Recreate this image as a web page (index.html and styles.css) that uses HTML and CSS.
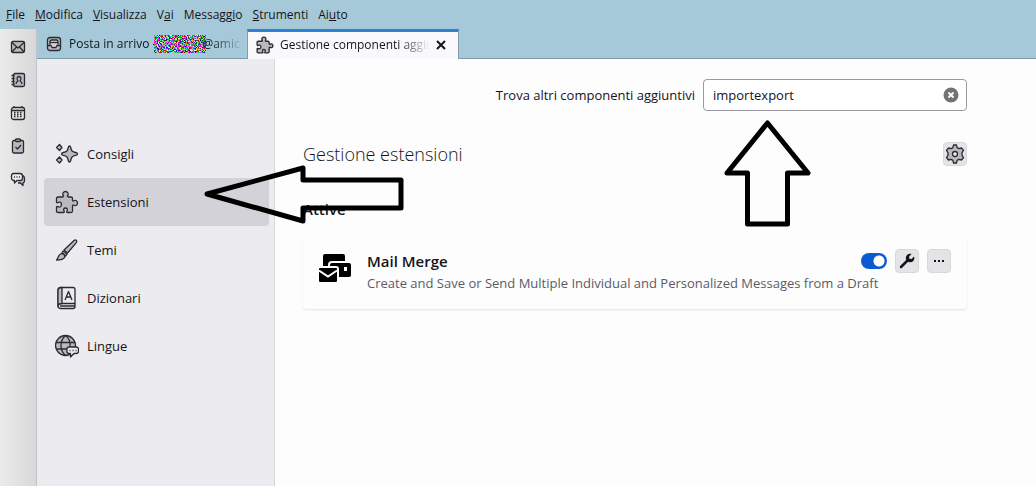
FILE: index.html
```html
<!DOCTYPE html>
<html lang="it">
<head>
    <meta charset="UTF-8">
    <meta name="viewport" content="width=device-width, initial-scale=1.0">
    <title>Gestione componenti aggiuntivi</title>
    <link rel="stylesheet" href="styles.css">
</head>
<body>
    <nav class="menubar">
        <button type="button"><u>F</u>ile</button>
        <button type="button"><u>M</u>odifica</button>
        <button type="button"><u>V</u>isualizza</button>
        <button type="button">V<u>a</u>i</button>
        <button type="button">Messagg<u>i</u>o</button>
        <button type="button"><u>S</u>trumenti</button>
        <button type="button">Ai<u>u</u>to</button>
    </nav>

    <div class="window">
        <!-- Spaces toolbar -->
        <nav class="spaces">
            <button type="button" aria-label="Posta">
                <svg class="icon" width="16" height="16" viewBox="0 0 16 16"><rect x="1.5" y="2.5" width="13" height="11" rx="1.5"/><path d="M2 3.5l6 5.500 6-5.500M2 13l4.500-5M14 13L9.500 8"/></svg>
            </button>
            <button type="button" aria-label="Rubrica">
                <svg class="icon" width="16" height="16" viewBox="0 0 16 16"><rect x="3.500" y="1.500" width="11" height="13" rx="1.500"/><path d="M1.500 3.500h3M1.500 6.500h3M1.500 9.500h3M1.500 12.500h3M6 12c0-2 1-2.500 2-3-1.500-2-1-4.500 1-4.500s2.500 2.500 1 4.500c1 .5 2 1 2 3"/></svg>
            </button>
            <button type="button" aria-label="Calendario">
                <svg class="icon hollow" width="16" height="16" viewBox="0 0 16 16"><rect x="1.500" y="2.500" width="13" height="12" rx="2"/><path d="M2 5.500h12M4 1v1.500M12 1v1.500"/><path stroke-dasharray="1.500 1.500" d="M4 7.500h9M4 9.500h9M4 11.500h9"/></svg>
            </button>
            <button type="button" aria-label="Attività">
                <svg class="icon" width="16" height="16" viewBox="0 0 16 16"><rect x="2.500" y="2.500" width="11" height="12.500" rx="1.500"/><rect x="5.500" y="1" width="5" height="2.500" rx="1"/><path fill="none" d="M5.500 9l2 2 3.500-4"/></svg>
            </button>
            <button type="button" aria-label="Chat">
                <svg class="icon" width="16" height="16" viewBox="0 0 16 16"><path d="M12.500 4.500q2 .5 2 3v2q0 2-1.500 2.500v2.500L10.500 12H8"/><path class="paper" d="M3.500 2.500h6.500q2.500 0 2.500 2.500v2q0 2.500-2.500 2.500H7L4.500 12V9.500h-1Q1.500 9 1.500 7V5q0-2.500 2-2.500z"/><path d="M4 6h1M6.500 6h1M9 6h1"/></svg>
            </button>
        </nav>

        <div class="workspace">
            <div class="tabs" role="tablist">
                <div class="tab" role="tab" aria-selected="false">
                    <svg class="icon" width="16" height="16" viewBox="0 0 16 16"><rect x="1.500" y="1.500" width="13" height="13" rx="2.500"/><path class="paper" d="M2 9.500h3l1 2h4l1-2h3M4 8.500v-3q0-1.500 1.500-1.500h5Q12 4 12 5.500v3M4 6.500h8"/></svg>
                    <span class="tab-label">Posta in arrivo -<svg class="noise" width="52" height="18" aria-hidden="true"><filter id="grain" x="0" y="0" width="100%" height="100%" color-interpolation-filters="sRGB"><feTurbulence type="fractalNoise" baseFrequency="0.9" numOctaves="2" seed="4"/><feColorMatrix values="4 0 0 0 -1.500  0 4 0 0 -1.500  0 0 4 0 -1.400  0 0 0 0 1"/></filter><rect width="52" height="18" filter="url(#grain)"/></svg>@amic</span>
                </div>
                <div class="tab active" role="tab" aria-selected="true">
                    <svg class="icon tab-icon" width="18" height="18" viewBox="0 0 24 24"><use href="#puzzle"/></svg>
                    <span class="tab-label">Gestione componenti aggiuntivi</span>
                    <button type="button" class="tab-close" aria-label="Chiudi scheda">
                        <svg width="10" height="10" viewBox="0 0 10 10"><path d="M1 1l8 8M9 1L1 9"/></svg>
                    </button>
                </div>
            </div>

            <div class="page">
                <nav class="categories">
                    <a href="#consigli">
                        <svg class="icon" width="24" height="24" viewBox="0 0 24 24"><path d="M14.500 4c.8 0 1 .6 1.200 1.500.7 3.500 1.300 4.300 5 5 1 .2 1.800.6 1.800 1.500s-.8 1.200-1.800 1.400c-3.700.8-4.300 1.600-5 5.100-.2.900-.4 1.500-1.200 1.500s-1-.6-1.200-1.500c-.7-3.500-1.300-4.300-5-5.100-1-.2-1.800-.5-1.800-1.400s.8-1.300 1.800-1.500c3.700-.7 4.300-1.500 5-5 .2-.9.400-1.500 1.200-1.500z"/><path d="M4.500 2.500l2.500 3-2.500 3-3-3zM4.500 15l2.500 3-2.500 3-3-3z"/></svg>
                        Consigli
                    </a>
                    <a href="#estensioni" class="selected">
                        <svg class="icon" width="24" height="24" viewBox="0 0 24 24"><path id="puzzle" d="M1.500 8.500Q1.500 7 3 7h4.500c1 0 1.300-.7.700-1.500C7 3.500 8.500 1.500 10.500 1.500s3.500 2 2.300 4c-.6.800-.3 1.500.7 1.500H16q1.500 0 1.500 1.500V10c0 1 .7 1.300 1.500.8 1.800-1 3.500.2 3.500 2.200s-1.700 3.200-3.500 2.200c-.8-.5-1.500-.2-1.500.8v5q0 1.500-1.500 1.500h-3.500c-.8 0-1-.8-.5-1.500 1-1.700 0-3-1.500-3s-2.500 1.300-1.500 3c.5.700.3 1.500-.5 1.500H3q-1.500 0-1.500-1.500v-3.500c0-1 .7-1.200 1.500-.8 1.800.9 3.500-.2 3.500-2.200s-1.700-3-3.500-2c-.8.500-1.500.2-1.500-.8z"/></svg>
                        Estensioni
                    </a>
                    <a href="#temi">
                        <svg class="icon" width="24" height="24" viewBox="0 0 24 24"><path d="M9 12L19 2.500c1.500-1.300 3.500 0 2.500 1.800L12.500 15z"/><path d="M8 13l4 3-1.500 2L7 15z"/><path d="M6.500 15.500c2 0 4 2 3 4-1.200 2.500-5 2.500-8 2.500 2-1.500 1.500-5.500 5-6.500z"/></svg>
                        Temi
                    </a>
                    <a href="#dizionari">
                        <svg class="icon hollow" width="24" height="24" viewBox="0 0 24 24"><path d="M5.500 1.500H18q2 0 2 2v14H5.500Q3 17.500 3 20V4q0-2.500 2.500-2.500z"/><path class="shade" d="M3 19V4q0-2.500 4-2.500v16Q3 17.500 3 20z"/><path d="M3 20q0 2.500 3 2.500h12q2 0 2-2v-3M5 20h15M10 14l3.500-8.500L17 14M11.500 11h4"/></svg>
                        Dizionari
                    </a>
                    <a href="#lingue">
                        <svg class="icon" width="24" height="24" viewBox="0 0 24 24"><circle cx="10.500" cy="11.500" r="10"/><path fill="none" d="M1 8.500h19M1 15h12M10.500 1.500c-6 5-6 15 0 20M10.500 1.500c4 3 5 7 4.500 11"/><path class="paper" d="M14 13h7q2.500 0 2.500 2v2.500q0 2-2.500 2h-2L15.500 23v-3.500H14q-2 0-2-2V15q0-2 2-2z"/><path d="M14.500 16.500h1M17.500 16.500h1M20.500 16.500h1"/></svg>
                        Lingue
                    </a>
                </nav>

                <main class="content">
                    <form class="search">
                        <label for="search">Trova altri componenti aggiuntivi</label>
                        <div class="search-box">
                            <input type="text" id="search" value="importexport">
                            <button type="button" aria-label="Cancella">
                                <svg width="16" height="16" viewBox="0 0 16 16"><circle cx="8" cy="8" r="7.500" fill="#737373"/><path d="M5.500 5.500l5 5M10.500 5.500l-5 5" stroke="#fff" stroke-width="2"/></svg>
                            </button>
                        </div>
                    </form>

                    <div class="heading">
                        <h1>Gestione estensioni</h1>
                        <button type="button" class="tool" aria-label="Strumenti">
                            <svg class="icon" width="20" height="20" viewBox="0 0 20 20"><path d="M8.500 1h3l.6 2.600 1.800 1L16.500 4 18.500 6.500l-1.500 2.200v2.600l1.500 2.200-2 2.500-2.600-.6-1.800 1-.6 2.600h-3l-.6-2.600-1.800-1-2.600.6-2-2.500L3 11.300V8.700L1.500 6.500 3.500 4l2.600.6 1.800-1z"/><circle class="paper" cx="10" cy="10" r="2.500"/></svg>
                        </button>
                    </div>

                    <h2>Attive</h2>

                    <article class="card">
                        <svg class="logo" width="32" height="32" viewBox="0 0 32 32">
                            <rect x="4" y="2" width="22" height="16" rx="2"/>
                            <rect class="front" x="10" y="10" width="23" height="16" rx="3"/>
                            <path fill="#fff" d="M25 15h3v4h-3z"/>
                            <rect class="front" x="-1" y="15" width="20" height="16" rx="2"/>
                            <path d="M0 18.500l9 6 9-6" stroke="#fff" stroke-width="2" fill="none"/>
                        </svg>
                        <div class="details">
                            <h3>Mail Merge</h3>
                            <p>Create and Save or Send Multiple Individual and Personalized Messages from a Draft</p>
                        </div>
                        <div class="actions">
                            <input type="checkbox" class="toggle" aria-label="Attiva Mail Merge" checked>
                            <button type="button" class="tool" aria-label="Opzioni">
                                <svg width="16" height="16" viewBox="0 0 16 16"><path d="M2 14l7-7" stroke="#15141a" stroke-width="2.500" stroke-linecap="round"/><path fill="#15141a" d="M12.500 1L10 3.800l.5 2L12.500 6 15 3.500c1.500 3.500-2 7-5.500 5.500L7 6.500C6 3 9 0 12.500 1z"/></svg>
                            </button>
                            <button type="button" class="tool" aria-label="Altre opzioni">
                                <svg width="16" height="16" viewBox="0 0 16 16"><path fill="#15141a" d="M3 7h2v2H3zM7 7h2v2H7zM11 7h2v2h-2z"/></svg>
                            </button>
                        </div>
                    </article>
                </main>
            </div>
        </div>
    </div>

    <!-- Arrows drawn over the page -->
    <svg class="arrow arrow-left" width="200" height="62" viewBox="0 0 200 62"><path d="M3 31L99 5v12h98v28H99v13z"/></svg>
    <svg class="arrow arrow-up" width="90" height="110" viewBox="0 0 90 110"><path d="M43.500 4L84 54H63.500v51h-40V54H3z"/></svg>
</body>
</html>
```
FILE: styles.css
```css
body {
    margin: 0;
    min-height: 100vh;
    display: flex;
    flex-direction: column;
    position: relative;
    font-family: "Open Sans", "Noto Sans", sans-serif;
    font-size: 13px;
    color: #15141a;
    background-color: #a5c9d9;
}
button {
    font: inherit;
    color: inherit;
    padding: 0;
    border: none;
    background: none;
}
svg {
    flex: none;
    fill: none;
}
.icon {
    fill: #b9b9be;
    stroke: #2b2a33;
    stroke-width: 1.3;
    stroke-linejoin: round;
}
.hollow {
    fill: none;
}
.shade {
    fill: #b9b9be;
}
.paper {
    fill: #ededf0;
}
.menubar {
    display: flex;
    gap: 10px;
    height: 29px;
    padding-left: 6px;
    font-size: 12px;
}
.window {
    flex: 1;
    display: flex;
}
.spaces {
    width: 36px;
    display: flex;
    flex-direction: column;
    align-items: center;
    gap: 17px;
    padding-top: 10px;
    border-right: 1px solid #c3c3cb;
    background: linear-gradient(to right, #ebebeb, #d8d8d8);
}
.spaces button {
    height: 16px;
}
.spaces svg {
    display: block;
}
.workspace {
    flex: 1;
    min-width: 0;
    display: flex;
    flex-direction: column;
}
.tabs {
    display: flex;
    height: 30px;
    box-shadow: inset 0 -1px #809ca9;
}
.tab {
    box-sizing: border-box;
    width: 210px;
    display: flex;
    align-items: center;
    gap: 7px;
    padding: 0 4px 0 9px;
    font-size: 12px;
}
.tab.active {
    width: 212px;
    gap: 6px;
    padding: 0 12px 2px 8px;
    border: 1px solid #809ca9;
    border-top: 3px solid #2b82d4;
    border-bottom: none;
    background-color: #f9f9fb;
}
.tab-icon {
    stroke-width: 1.8;
}
.tab-label {
    flex: 1;
    overflow: hidden;
    white-space: nowrap;
    mask-image: linear-gradient(to left, transparent, #000 32px);
}
.noise {
    vertical-align: middle;
    margin: 0 -4px 0 -2px;
}
.tab-close {
    display: flex;
}
.tab-close svg {
    stroke: #15141a;
    stroke-width: 2;
}
.page {
    flex: 1;
    display: flex;
    background-color: #fdfdfe;
}
.categories {
    box-sizing: border-box;
    width: 238px;
    padding: 71px 5px 0 7px;
    border-right: 1px solid #d6d6dc;
    background-color: #ebebf0;
}
.categories a {
    display: flex;
    align-items: center;
    gap: 8px;
    height: 48px;
    padding-left: 11px;
    border-radius: 4px;
    color: inherit;
    text-decoration: none;
}
.categories .selected {
    background-color: #d2d2d8;
}
.content {
    flex: 1;
    max-width: 664px;
    padding: 20px 28px 0;
}
.search {
    display: flex;
    justify-content: flex-end;
    align-items: center;
    gap: 8px;
}
.search-box {
    box-sizing: border-box;
    width: 264px;
    height: 32px;
    display: flex;
    align-items: center;
    padding: 0 7px 0 9px;
    border: 1px solid #99999f;
    border-radius: 4px;
    background-color: #fff;
}
.search-box input {
    flex: 1;
    min-width: 0;
    padding: 0;
    border: none;
    outline: none;
    font: inherit;
    color: inherit;
    background: none;
}
.search-box button {
    display: flex;
}
.heading {
    display: flex;
    justify-content: space-between;
    align-items: center;
    margin-top: 31px;
}
h1 {
    margin: 0;
    font-size: 18px;
    line-height: 24px;
    font-weight: 300;
}
h2 {
    margin: 31px 0 16px;
    font-size: 15px;
    line-height: 24px;
    font-weight: 600;
}
.tool {
    width: 24px;
    height: 24px;
    display: flex;
    align-items: center;
    justify-content: center;
    border: 1px solid #d8d8dc;
    border-radius: 4px;
    background-color: #e4e4e7;
}
.card {
    display: flex;
    height: 72px;
    border-radius: 4px;
    box-shadow: 0 1px 2px #e4e4e8;
    background-color: #fdfdfe;
}
.logo {
    margin: 15px 16px 0;
    fill: #000;
}
.front {
    stroke: #fff;
    stroke-width: 2;
}
.details {
    flex: 1;
    padding-top: 12px;
}
h3 {
    margin: 0;
    font-size: 15px;
    line-height: 24px;
    font-weight: 600;
}
.details p {
    margin: 0;
    line-height: 20px;
    white-space: nowrap;
    color: #5b5b66;
}
.actions {
    width: 0;
    display: flex;
    justify-content: flex-end;
    gap: 8px;
    padding: 12px 16px 0 0;
}
.actions .tool {
    flex: none;
}
.toggle {
    appearance: none;
    flex: none;
    width: 26px;
    height: 16px;
    margin: 4px 0;
    border-radius: 8px;
    background: radial-gradient(circle at 18px 8px, #fff 5px, #0a5bd3 6px);
}
.arrow {
    position: absolute;
    stroke: #000;
    stroke-width: 5;
    stroke-linejoin: round;
}
.arrow-left {
    left: 204px;
    top: 163px;
}
.arrow-up {
    left: 724px;
    top: 119px;
}
```
